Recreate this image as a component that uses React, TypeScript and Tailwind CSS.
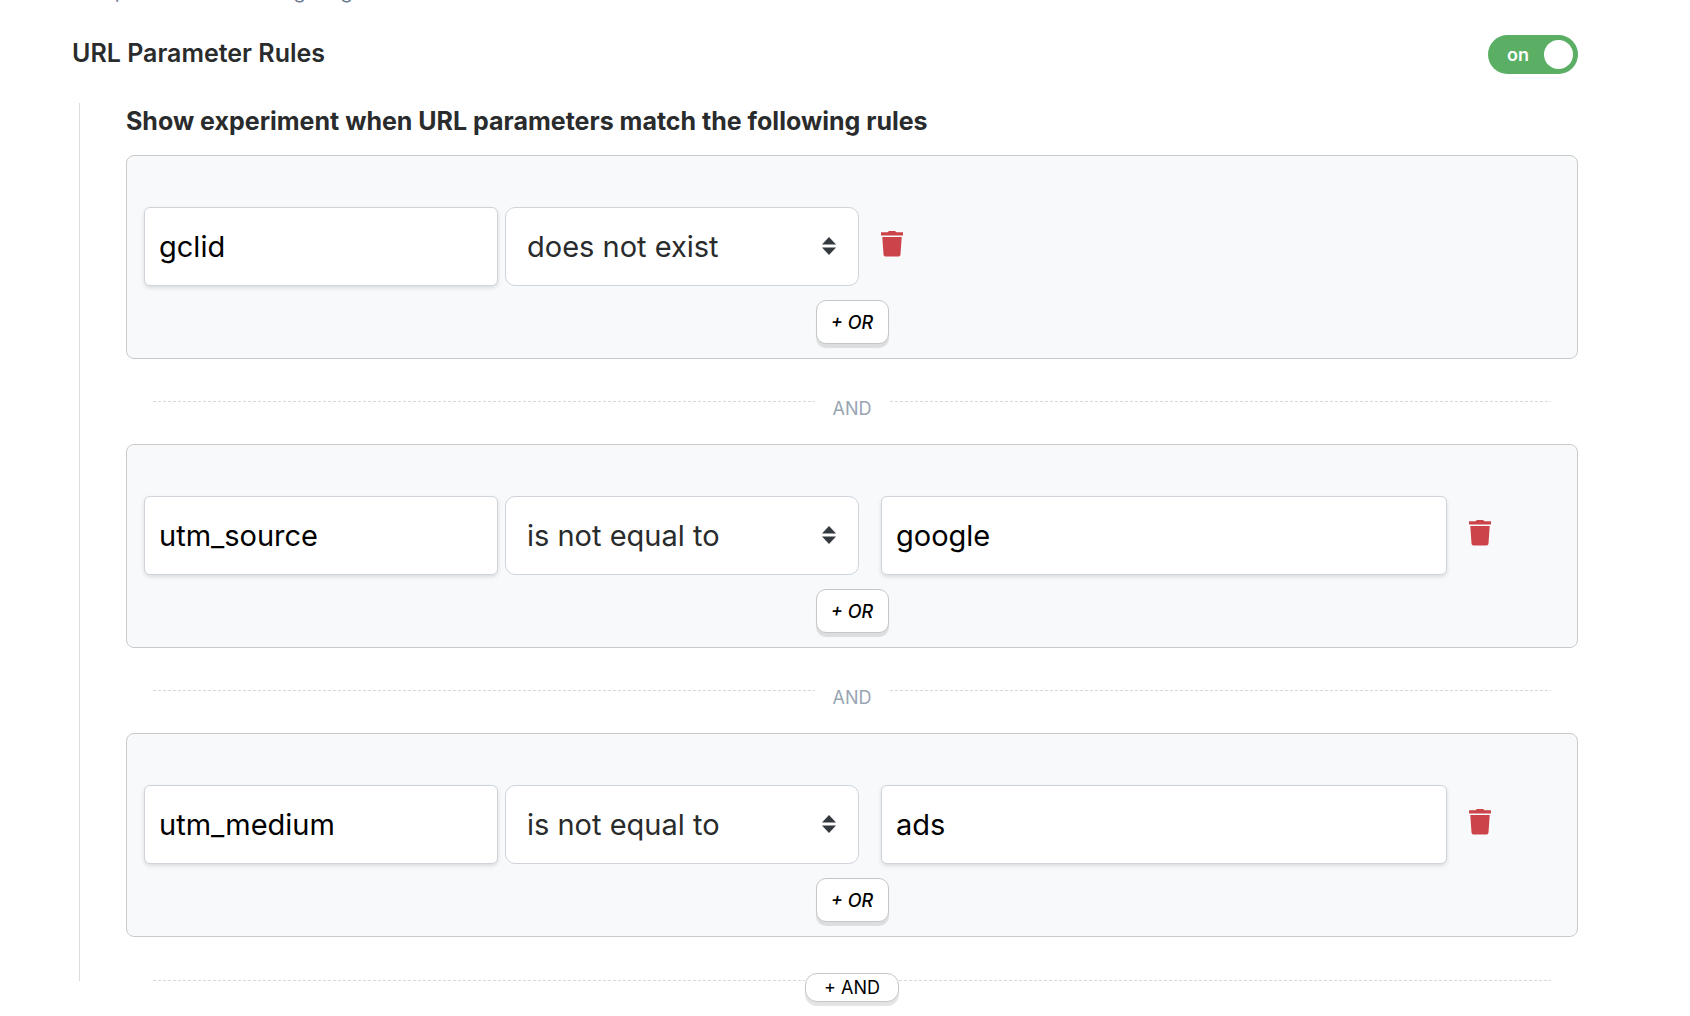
import { useState } from "react";

type Rule = { param: string; op: string; value?: string };

const RULES: Rule[] = [
  { param: "gclid", op: "does not exist" },
  { param: "utm_source", op: "is not equal to", value: "google" },
  { param: "utm_medium", op: "is not equal to", value: "ads" },
];

const OPERATORS = ["is equal to", "is not equal to", "exists", "does not exist"];

function TrashIcon() {
  return (
    <svg width="22" height="26" viewBox="0 0 22 26" fill="#cb444a" aria-hidden="true">
      <path d="M0 1.300h6.500L8 0h6l1.500 1.300H22V4.500H0z" />
      <path d="M1.300 6h19.400l-1.200 17.500a2 2 0 0 1-2 1.900H4.500a2 2 0 0 1-2-1.900z" />
    </svg>
  );
}

function SortIcon() {
  return (
    <svg
      className="pointer-events-none absolute right-[23px] top-[30px]"
      width="14"
      height="18"
      viewBox="0 0 14 18"
      fill="#343a40"
      aria-hidden="true"
    >
      <path d="M7 0l7 7.500H0z" />
      <path d="M0 10.500h14L7 18z" />
    </svg>
  );
}

const field =
  "h-[79px] rounded-md border border-[#ced4da] bg-white px-[14px] text-[29px] text-black shadow-[0_2px_4px_rgba(0,0,0,0.12)] outline-none";

function RuleGroup({ rule }: { rule: Rule }) {
  return (
    <section className="flex h-[204px] flex-col rounded-lg border border-[#c8cacc] bg-[#f8f9fb] px-[17px] pt-[51px]">
      <div className="flex">
        <input aria-label="Parameter" className={`${field} w-1/4`} defaultValue={rule.param} />
        <div className="relative ml-[7px] w-1/4">
          <select
            aria-label="Condition"
            defaultValue={rule.op}
            className="h-[79px] w-full appearance-none rounded-[10px] border border-[#ced4da] bg-white px-[21px] text-[29px] text-[#292b2c] outline-none"
          >
            {OPERATORS.map((o) => (
              <option key={o}>{o}</option>
            ))}
          </select>
          <SortIcon />
        </div>
        {rule.value !== undefined && (
          <input aria-label="Value" className={`${field} ml-[22px] w-2/5`} defaultValue={rule.value} />
        )}
        <button type="button" aria-label="Delete rule" className="ml-[22px] mt-6 self-start">
          <TrashIcon />
        </button>
      </div>
      <button
        type="button"
        className="mt-[14px] h-11 w-[73px] self-center rounded-[10px] border border-[#c4c6c8] bg-white pt-px text-lg font-medium italic text-black shadow-[0_4px_1px_rgba(0,0,0,0.11)]"
      >
        + OR
      </button>
    </section>
  );
}

const dashes =
  "h-px flex-1 bg-[repeating-linear-gradient(to_right,#d6d8dc_0px,#d6d8dc_3px,transparent_3px,transparent_5px)]";

function AndDivider() {
  return (
    <div className="flex h-[85px] px-[27px] pt-[42px]">
      <div className={dashes} />
      <span className="w-[75px] text-center text-lg leading-4 text-[#98a5b3]">AND</span>
      <div className={dashes} />
    </div>
  );
}

export default function App() {
  const [on, setOn] = useState(true);
  return (
    <main className="min-h-screen overflow-hidden bg-white pl-[72px] pr-28 font-['Inter',sans-serif] text-[#292b2c]">
      <p className="-mt-[21px] h-6 text-xl leading-6 text-[#6b7a90]">Setup device-based targeting</p>
      <header className="mt-[31px] flex h-10 items-center justify-between">
        <h2 className="pb-0.5 text-[25px] font-semibold leading-8">URL Parameter Rules</h2>
        <label className="flex h-[39px] w-[90px] cursor-pointer items-center justify-between rounded-full bg-[#5aaf65] pl-[19px] pr-[5px]">
          <input
            type="checkbox"
            aria-label="URL Parameter Rules"
            className="sr-only"
            checked={on}
            onChange={() => setOn(!on)}
          />
          <span className="pt-0.5 text-lg font-semibold text-white">{on ? "on" : "off"}</span>
          <span className="size-[29px] rounded-full bg-white" />
        </label>
      </header>
      <div className="ml-[7px] mt-[29px] flex">
        <div className="mb-[21px] w-px bg-[#dcdddf]" />
        <div className="ml-[46px] flex-1">
          <h3 className="mb-4 pt-px text-[25px] font-bold leading-[35px]">
            Show experiment when URL parameters match the following rules
          </h3>
          {RULES.map((rule, i) => (
            <div key={rule.param}>
              {i > 0 && <AndDivider />}
              <RuleGroup rule={rule} />
            </div>
          ))}
          <div className="flex px-[27px] pt-9">
            <div className={`${dashes} mt-[7px]`} />
            <button
              type="button"
              className="h-[29px] w-[94px] rounded-xl border border-[#c4c6c8] bg-white text-lg leading-6 text-black shadow-[0_4px_1px_rgba(0,0,0,0.11)]"
            >
              + AND
            </button>
            <div className={`${dashes} mt-[7px]`} />
          </div>
        </div>
      </div>
    </main>
  );
}
